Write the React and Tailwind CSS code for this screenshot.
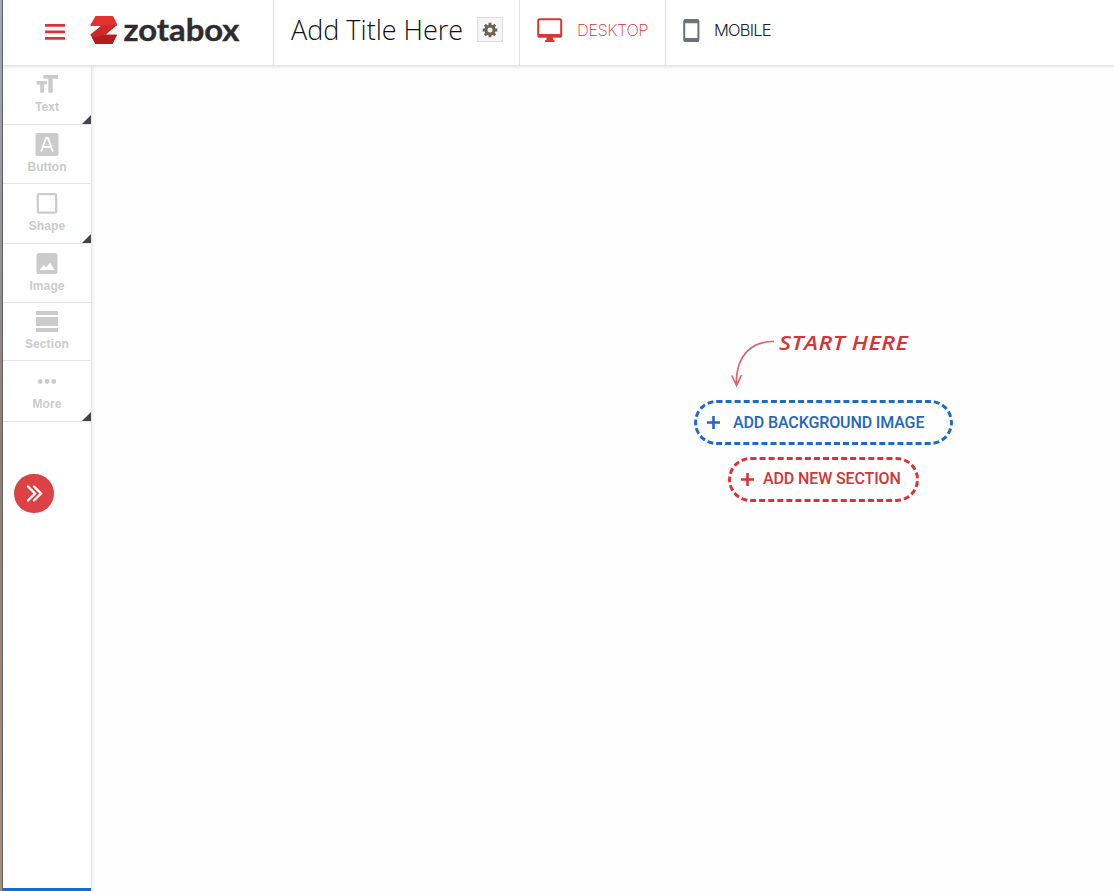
import React from 'react';

const TextIcon = () => (
  <svg width="24" height="24" viewBox="0 0 24 24" fill="currentColor">
    <path d="M8.3 3h14.7v3.8h-5.3v14h-4.4v-14h-5zM1.6 9h10.4v3.6H8.9v8.2H5.2v-8.2H1.6z" />
  </svg>
);

const ButtonIcon = () => (
  <svg width="24" height="24" viewBox="0 0 24 24" fill="none">
    <rect x=".5" y="1" width="23" height="23" rx="2" fill="currentColor" />
    <path d="M6.2 19.5L11.1 6h1.8l4.9 13.5M8 15h8" stroke="white" strokeWidth="1.8" />
  </svg>
);

const ShapeIcon = () => (
  <svg width="24" height="24" viewBox="0 0 24 24" fill="none">
    <rect x="2.8" y="3.2" width="18.4" height="18.4" rx="1.2" stroke="currentColor" strokeWidth="2.2" />
  </svg>
);

const ImageIcon = () => (
  <svg width="24" height="24" viewBox="0 0 24 24">
    <rect x="1.5" y="2" width="21" height="21" rx="2.5" fill="currentColor" />
    <path d="M4.5 19l4.2-5 2.5 2.6 3.7-4.8 4.8 7.2z" fill="white" />
  </svg>
);

const SectionIcon = () => (
  <svg width="24" height="24" viewBox="0 0 24 24" fill="currentColor">
    <path d="M1 2h22v4H1zM1 8h22v9H1zM1 19h22v4H1z" />
  </svg>
);

const MoreIcon = () => (
  <svg width="24" height="24" viewBox="0 0 24 24" fill="currentColor">
    <circle cx="5.2" cy="12.5" r="2.4" />
    <circle cx="12" cy="12.5" r="2.4" />
    <circle cx="18.8" cy="12.5" r="2.4" />
  </svg>
);

const tools = [
  { label: 'Text', Icon: TextIcon, size: 'h-[59px] pt-[6px]', more: true },
  { label: 'Button', Icon: ButtonIcon, size: 'h-[59px] pt-[7px]' },
  { label: 'Shape', Icon: ShapeIcon, size: 'h-[60px] pt-[7px]', more: true },
  { label: 'Image', Icon: ImageIcon, size: 'h-[59px] pt-[7px]' },
  { label: 'Section', Icon: SectionIcon, size: 'h-[58px] pt-[6px]' },
  { label: 'More', Icon: MoreIcon, size: 'h-[61px] pt-[8px]', more: true },
];

const Logo = () => (
  <svg width="156" height="44" viewBox="0 0 156 44" className="ml-[25px] mt-[8px]">
    <path d="M5.5 8H23l4.3 8.5-1 1.5H1l-.7-1z" fill="#e13131" />
    <path d="M11.5 17.5h15L16 26.5h11L22.5 36H5.5L.3 26.5z" fill="#cd292a" />
    <path d="M2 29.5l14-2.5h11l-4.5 9h-17z" fill="#b41c1f" />
    <text
      x="33.5"
      y="33.3"
      textLength="116"
      lengthAdjust="spacingAndGlyphs"
      fill="#302b2d"
      stroke="#302b2d"
      strokeWidth=".4"
      className="font-['Lato'] text-[30px] font-bold"
    >
      zotabox
    </text>
  </svg>
);

const Header = () => (
  <header className="relative z-10 flex h-[66px] border-b border-[#e2e2e2] bg-white shadow-[0_1px_3px_rgba(0,0,0,0.1)]">
    <div className="flex w-[271px] border-r border-[#e2e2e2]">
      <svg width="20" height="17" viewBox="0 0 20 17" fill="#dc3537" className="mt-[24px] ml-[42px]">
        <path d="M0 0h20v2.8H0zM0 6.4h20v2.8H0zM0 13h20v2.8H0z" />
      </svg>
      <Logo />
    </div>

    <div className="flex w-[246px] border-r border-[#e2e2e2] pl-[17px]">
      <h1 className="w-[186px] pt-[10px] font-['Open_Sans',sans-serif] text-[27px] leading-[40px] font-light whitespace-nowrap text-[#111]">
        Add Title Here
      </h1>
      <button className="mt-[17px] flex h-[25px] w-[26px] items-center justify-center border border-[#dcdcdc] bg-[#f5f5f5] text-[#6b6257]">
        <svg width="16" height="16" viewBox="-8 -8 16 16" fill="none" stroke="currentColor">
          <circle r="4" strokeWidth="3" />
          <path
            d="M0-7.3V-4M0 4v3.3M-7.3 0H-4M4 0h3.3M-5.2-5.2l2 2M3.2 3.2l2 2M-5.2 5.2l2-2M3.2-3.2l2-2"
            strokeWidth="2.8"
          />
        </svg>
      </button>
    </div>

    <div className="flex w-[146px] border-r border-[#e2e2e2] pl-[17px] text-[#d93638]">
      <svg width="26" height="26" viewBox="0 0 26 26" className="mt-[17px]">
        <rect x="1.2" y="2.2" width="23" height="17.6" rx="1.6" fill="none" stroke="currentColor" strokeWidth="2" />
        <path d="M1 17h23.5v3H1zM10 20h5.5l1 3.2h1.2V25H8v-1.8h1.2z" fill="currentColor" />
      </svg>
      <span className="ml-[14px] pt-[18px] font-['Inter',sans-serif] text-[16.5px] leading-6 font-extralight tracking-[-0.5px]">DESKTOP</span>
    </div>

    <div className="flex pl-[17px]">
      <svg width="17" height="25" viewBox="0 0 17 25" className="mt-[18px] text-[#6c7376]">
        <rect x="1.2" y="2" width="14.2" height="21" rx="1.5" fill="none" stroke="currentColor" strokeWidth="2" />
        <path d="M1 1.5h14.5v3.8H1zM1 20h14.5v3.8H1z" fill="currentColor" />
      </svg>
      <span className="ml-[14px] pt-[18px] font-['Inter',sans-serif] text-[16.5px] leading-6 font-light tracking-[-0.8px] text-[#222]">MOBILE</span>
    </div>
  </header>
);

const Sidebar = () => (
  <aside className="flex w-[88px] shrink-0 flex-col border-b-[3px] border-[#1c6acb] bg-white shadow-[1px_0_3px_rgba(0,0,0,0.14)]">
    {tools.map(({ label, Icon, size, more }) => (
      <button
        key={label}
        className={`relative flex w-full shrink-0 flex-col items-center border-b border-[#e4e4e4] text-[#cbcbcb] ${size}`}
      >
        <Icon />
        <span className="mt-[3px] font-['Liberation_Sans',sans-serif] text-xs leading-4 font-bold tracking-[0.1px]">{label}</span>
        {more && (
          <svg width="9" height="9" viewBox="0 0 9 9" className="absolute right-0 bottom-0">
            <path d="M9 0v9H0z" fill="#42444b" />
          </svg>
        )}
      </button>
    ))}
    <button className="mt-[52px] ml-[11px] flex h-[39px] w-10 shrink-0 items-center justify-center rounded-full bg-[#dc4244]">
      <svg width="20" height="20" viewBox="0 0 20 20" fill="none" stroke="white" strokeWidth="2.4" strokeLinecap="round">
        <path d="M4 2.5l7 7-7 7M10 2.5l7 7-7 7" />
      </svg>
    </button>
  </aside>
);

const Canvas = () => (
  <main className="flex flex-1 flex-col pl-[603px] pt-[264px] font-['Roboto',sans-serif] font-medium">
    <div className="flex h-[70px] pl-[34px] text-[#d83438]">
      <svg width="48" height="60" viewBox="0 0 48 60" fill="none" stroke="#de6467" strokeWidth="1.7">
        <path d="M46 11.5C27 11 8 22 8.4 54M3.8 45.5L8.6 55.5 13.5 45" />
      </svg>
      <span className="ml-[3px] origin-left scale-x-[1.17] font-['Open_Sans',sans-serif] text-[20px] leading-[25px] font-semibold italic whitespace-nowrap tracking-[0.4px]">
        START HERE
      </span>
    </div>

    <button className="flex h-[45px] w-[259px] items-center rounded-[23px] border-[3px] border-dashed border-[#1f69c8] pl-[10px] text-[#2467be]">
      <svg width="13" height="13" viewBox="0 0 13 13" stroke="currentColor" strokeWidth="2.6">
        <path d="M6.5 0v13M0 6.5h13" />
      </svg>
      <span className="ml-[13px] text-base whitespace-nowrap tracking-[-0.12px]">ADD BACKGROUND IMAGE</span>
    </button>

    <button className="mt-[12px] ml-[34px] flex h-[45px] w-[191px] items-center rounded-[23px] border-[3px] border-dashed border-[#d83438] pl-[10px] text-[#d03539]">
      <svg width="13" height="13" viewBox="0 0 13 13" stroke="currentColor" strokeWidth="2.6">
        <path d="M6.5 0v13M0 6.5h13" />
      </svg>
      <span className="mb-[2px] ml-[9px] text-base whitespace-nowrap tracking-[-0.12px]">ADD NEW SECTION</span>
    </button>
  </main>
);

const App = () => {
  return (
    <div className="flex h-[891px] w-[1114px] overflow-hidden bg-[#fefefe]">
      <div className="w-[3px] shrink-0 border-r border-[#62646a] bg-linear-to-b from-[#a4abb8] via-[#8b8074] to-[#a39277]" />
      <div className="flex min-w-0 flex-1 flex-col">
        <Header />
        <div className="flex flex-1">
          <Sidebar />
          <Canvas />
        </div>
      </div>
    </div>
  );
};

export default App;
